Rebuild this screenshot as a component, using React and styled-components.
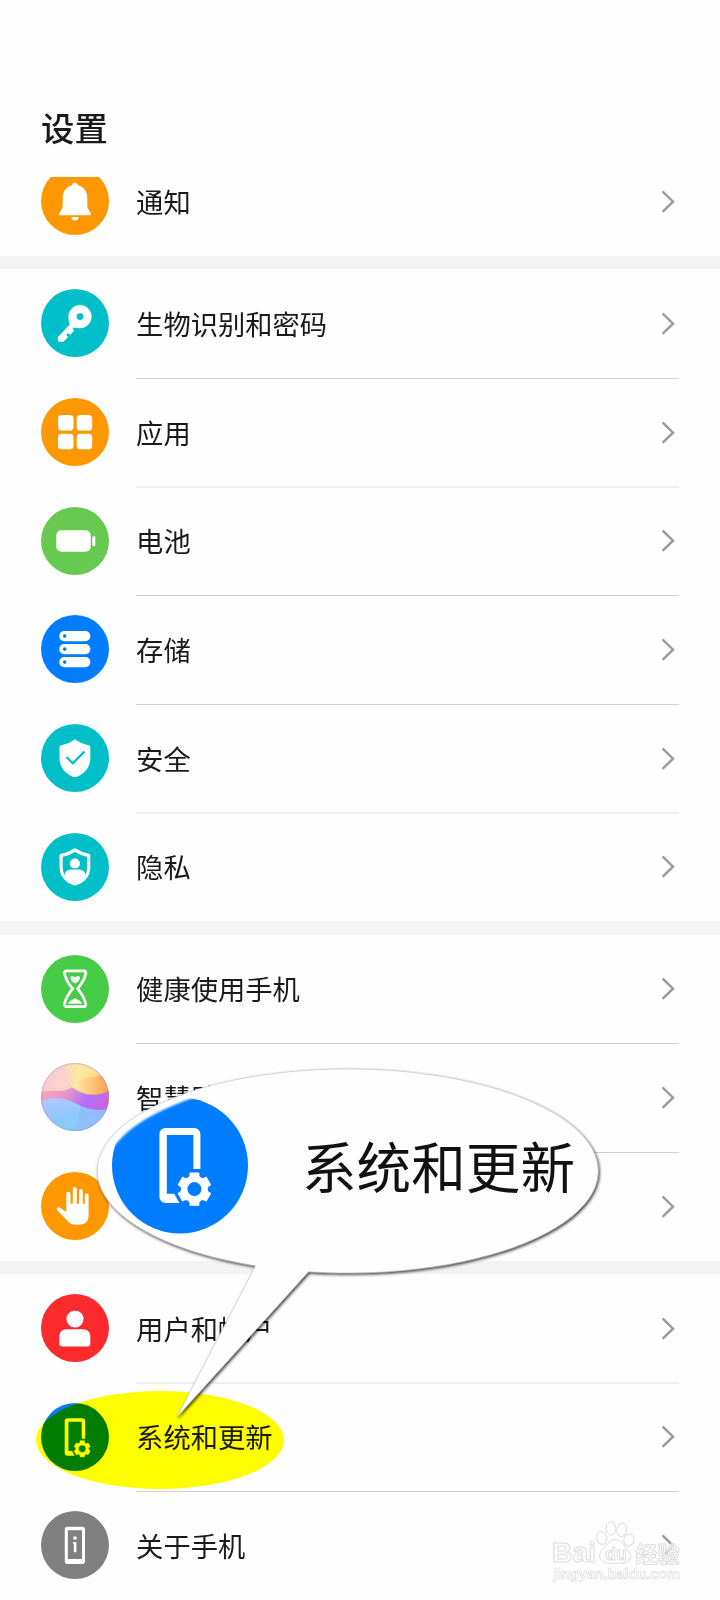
import React from "react";
import styled, { createGlobalStyle } from "styled-components";

const GlobalStyle = createGlobalStyle`
  * {
    box-sizing: border-box;
  }
  body {
    margin: 0;
    background: #fff;
    font-family: "Noto Sans CJK SC", sans-serif;
    color: #1a1a1a;
  }
`;

const Screen = styled.div`
  position: relative;
  width: 720px;
  height: 1600px;
  overflow: hidden;
  background: #fefefe;
  isolation: isolate;
`;

const Header = styled.header`
  height: 177px;
  padding: 102px 41px 0;
`;

const Title = styled.h1`
  margin: 0;
  font-size: 33.4px;
  font-weight: 500;
  line-height: 50px;
`;

const Group = styled.section`
  display: flex;
  flex-direction: column;
  justify-content: flex-end;
  height: ${p => (p.$height ? p.$height : "auto")};
  margin-bottom: 13.33px;
  overflow: hidden;
`;

const List = styled.main`
  background: #f3f3f3;
`;

const Row = styled.div`
  display: flex;
  flex: none;
  align-items: center;
  height: 108.667px;
  padding: 0 41px 0 40.5px;
  background: #fefefe;
`;

const Badge = styled.div`
  flex: none;
  width: 68px;
  height: 68px;
  margin-top: -0.6px;
  border-radius: 50%;
  background: ${p => p.$color};

  svg {
    display: block;
  }
`;

const Content = styled.div`
  display: flex;
  flex: 1;
  align-items: center;
  justify-content: space-between;
  height: 100%;
  margin-left: 27px;
  margin-top: ${p => (p.$soft ? "-2px" : 0)};
  padding-right: 4px;
  border-top: ${p => (p.$soft ? 2 : 1)}px solid ${p => (p.$line ? (p.$soft ? "#efefef" : "#d2d2d2") : "transparent")};
`;

const Label = styled.span`
  padding: 0 0 2px 0.6px;
  font-size: 27.3px;
  line-height: 40px;
  white-space: nowrap;
`;

const Highlight = styled.div`
  position: absolute;
  left: 36px;
  top: 1391px;
  width: 248px;
  height: 98px;
  border-radius: 50%;
  background: #ffff00;
  mix-blend-mode: multiply;
`;

const Bubble = styled.svg`
  position: absolute;
  left: 80px;
  top: 1050px;
  overflow: visible;
`;

const BubbleText = styled.div`
  position: absolute;
  left: 302px;
  top: 1125px;
  font-size: 54.6px;
  line-height: 80px;
  white-space: nowrap;
  color: #111;
`;

const Watermark = styled.svg`
  position: absolute;
  left: 545px;
  top: 1515px;

  text {
    font-family: "Liberation Sans", "Noto Sans CJK SC", sans-serif;
    font-weight: 700;
  }
`;

const gearPath = (cx, cy) => {
  const points = [];
  for (let i = 0; i < 6; i++) {
    const base = i * 60 - 90;
    [[-30, 6.3], [-19, 6.8], [-15, 8.3], [15, 8.3], [19, 6.8]].forEach(([a, r]) => {
      const rad = ((base + a) * Math.PI) / 180;
      points.push(`${(cx + r * Math.cos(rad)).toFixed(2)} ${(cy + r * Math.sin(rad)).toFixed(2)}`);
    });
  }
  return `M${points.join("L")}Z`;
};

const PhoneGear = () => (
  <g fill="#fff">
    <path d="M44.2 35.7h-3.5V18.8H27.4v29.3h3.7l2.6 4.7h-7a3 3 0 0 1-3-3V18.2a3 3 0 0 1 3-3h14.5a3 3 0 0 1 3 3z" />
    <path
      fillRule="evenodd"
      stroke="#fff"
      strokeWidth=".6"
      strokeLinejoin="round"
      d={`${gearPath(41.2, 45.8)}M45 45.8a3.8 3.8 0 1 0-7.6 0a3.8 3.8 0 1 0 7.6 0Z`}
    />
  </g>
);

const shield = "M34 15.3C37.5 18 43 20.5 47.6 21.2Q49.3 21.5 49.3 23V34.5C49.3 44 42.5 51 34 53.3C25.5 51 18.5 44 18.5 34.5V23Q18.5 21.5 20.2 21.2C25 20.5 30.5 18 34 15.3Z";

const icons = {
  bell: (
    <g fill="#fff">
      <path d="M34 15.7c-1.7 0-2.9 1-3.1 2.6C25.2 19.8 21.7 24.8 21.7 31V39C21.7 41.5 18.6 45 17.9 47c-.2.8.3 1.3 1 1.3h30.2c.7 0 1.2-.5 1-1.3C49.4 45 46.3 41.5 46.3 39V31C46.3 24.8 42.8 19.8 37.1 18.3C36.9 16.7 35.7 15.7 34 15.7Z" />
      <path d="M30.5 50h7a3.5 3.5 0 0 1-7 0z" />
    </g>
  ),
  key: (
    <path
      fill="#fff"
      fillRule="evenodd"
      stroke="#fff"
      strokeWidth=".5"
      strokeLinejoin="round"
      d="M39 16.2A11.4 11.4 0 1 1 35.3 38.4L31.2 38.7L32.7 41.8L29.5 45.5L26.5 44L25 45.4L26.7 48.3L22.3 52.5H17.4L17 48.3L29 35.5Q27.6 32 27.6 27.7A11.4 11.4 0 0 1 39 16.2ZM39 23.9A3.7 3.7 0 1 0 39 31.3A3.7 3.7 0 1 0 39 23.9Z"
    />
  ),
  apps: (
    <g fill="#fff">
      <rect x="17" y="17" width="15.5" height="15.5" rx="3.6" />
      <rect x="35.7" y="17" width="15.5" height="15.5" rx="3.6" />
      <rect x="17" y="35.8" width="15.5" height="15.5" rx="3.6" />
      <rect x="35.7" y="35.8" width="15.5" height="15.5" rx="3.6" />
    </g>
  ),
  battery: (
    <g fill="#fff">
      <rect x="15.3" y="23.3" width="34.4" height="21.4" rx="5" />
      <path d="M51.2 30.5q1-1.5 2-1.5t1.1 1.5v7.3q0 1.5-1.1 1.5t-2-1.5z" />
    </g>
  ),
  storage: (
    <g>
      {[16, 29, 42].map(y => (
        <g key={y}>
          <rect x="18.3" y={y} width="31" height="10.2" rx="4.8" fill="#fff" />
          <circle cx="23.7" cy={y + 5.1} r="1.8" fill="#007dff" />
        </g>
      ))}
    </g>
  ),
  security: (
    <g>
      <path d={shield} fill="#fff" />
      <path d="M25.5 33L31.8 39.3L43.5 27.6" fill="none" stroke="#00bfc9" strokeWidth="2.2" />
    </g>
  ),
  privacy: (
    <g>
      <path
        d="M34 16.8C38 19.5 43 21.6 47.7 22.3V34C47.7 43 42 48.8 34 51C26 48.8 20.1 43 20.1 34V22.3C25 21.6 30 19.5 34 16.8Z"
        fill="none"
        stroke="#fff"
        strokeWidth="3.2"
        strokeLinejoin="round"
      />
      <circle cx="33.9" cy="30.5" r="5.1" fill="#fff" />
      <path d="M23.5 42C24 38 27 36.4 31 36.4H37C41 36.4 44 38 44.5 42Q41 49 34 51Q27 49 23.5 42Z" fill="#fff" />
    </g>
  ),
  hourglass: (
    <g>
      <path
        d="M25 15.9H43.3Q45.5 16.5 44.6 19C43.5 25 40.5 29 36.6 33.7C40.5 38.5 43.5 42.5 44.6 48.5Q45.3 51.4 43 51.6H25.3Q23 51.4 23.7 48.5C24.8 42.5 27.8 38.5 31.7 33.7C27.8 29 24.8 25 23.7 19Q22.8 16.5 25 15.9Z"
        fill="none"
        stroke="#fff"
        strokeWidth="2.8"
      />
      <path d="M34.2 28.6C31 26.5 29.4 24.5 29.4 22.9C29.4 21 32.5 20.5 34.2 22.5C36 20.5 39 21 39 22.9C39 24.5 37.4 26.5 34.2 28.6Z" fill="#fff" />
      <path d="M27 48.7C28.5 45.5 31.5 45 34.2 42.9C37 45 39.8 45.5 41.3 48.7Z" fill="#fff" />
    </g>
  ),
  assistant: (
    <g>
      <defs>
        <linearGradient id="sky" x1="0" y1="0" x2="1" y2="1">
          <stop offset="0" stopColor="#f6c3cf" />
          <stop offset=".45" stopColor="#f9d3c4" />
          <stop offset="1" stopColor="#fa9a80" />
        </linearGradient>
        <linearGradient id="sun" x1="0" y1=".2" x2="1" y2=".8">
          <stop offset="0" stopColor="#fad9b4" />
          <stop offset=".4" stopColor="#fdeb9e" />
          <stop offset="1" stopColor="#fbb45f" />
        </linearGradient>
        <linearGradient id="dune" x1="0" y1="0" x2="1" y2="0">
          <stop offset="0" stopColor="#fdeeb0" />
          <stop offset=".5" stopColor="#fcc878" />
          <stop offset="1" stopColor="#fa9f50" />
        </linearGradient>
        <linearGradient id="violet" x1="0" y1="0" x2="1" y2=".3">
          <stop offset="0" stopColor="#f4a9bd" />
          <stop offset=".4" stopColor="#e896c8" />
          <stop offset=".75" stopColor="#b070f8" />
          <stop offset="1" stopColor="#c566e4" />
        </linearGradient>
        <linearGradient id="sea" x1=".2" y1="0" x2=".6" y2="1">
          <stop offset="0" stopColor="#b3c8fa" />
          <stop offset=".55" stopColor="#8bc8fd" />
          <stop offset="1" stopColor="#86d0fb" />
        </linearGradient>
        <clipPath id="ball">
          <circle cx="34" cy="34" r="34" />
        </clipPath>
        <filter id="haze">
          <feGaussianBlur stdDeviation="3" />
        </filter>
      </defs>
      <g clipPath="url(#ball)">
        <rect width="68" height="68" fill="url(#sky)" />
        <path d="M20 -5H72V30C56 34 38 32 28 20Z" fill="url(#sun)" filter="url(#haze)" />
        <circle cx="19" cy="13" r="13" fill="#fbd3d4" opacity=".6" />
        <path d="M0 29C13 26 22 31 31 24C43 33 56 32 68 27V50H0Z" fill="url(#violet)" />
        <path d="M31 23C40 14 52 13 68 13V28C56 34 40 33 31 23Z" fill="url(#dune)" />
        <path d="M0 38C15 32 26 36 36 41C47 47 57 48 68 46V68H0Z" fill="url(#sea)" />
        <path d="M32 68C38 60 38 51 40 43C50 48 58 48 68 46V68Z" fill="#9aaafb" opacity=".35" />
      </g>
      <circle cx="34" cy="34" r="33.5" fill="none" stroke="#b58ab8" strokeOpacity=".5" />
    </g>
  ),
  hand: (
    <path
      fill="#fff"
      d="M25.3 21.8a2.1 2.1 0 0 1 4.2 0V31.7h2.3V17a2 2 0 0 1 4 0V31.7H38V19a1.9 1.9 0 0 1 3.8 0V31.7H43.8V23.2a1.9 1.9 0 0 1 3.8 0V43C47.6 49.5 44.5 52.7 38 52.7H34.5C30.5 52.7 28 51 25.8 48.2L16.2 38.2C14.8 36.5 16.6 34.5 18.6 35.5L25.3 40Z"
    />
  ),
  user: (
    <g fill="#fff">
      <circle cx="34" cy="25" r="8.6" />
      <path d="M18.3 43.5C18.3 37.5 21 35.2 26.5 35.2H41C46.6 35.2 49.3 37.5 49.3 43.5V50Q49.3 52.4 47 52.4H20.7Q18.3 52.4 18.3 50Z" />
    </g>
  ),
  system: <PhoneGear />,
  about: (
    <g fill="#fff">
      <path
        fillRule="evenodd"
        d="M26.5 15.7H41.3Q44 15.7 44 18.4V50.3Q44 53 41.3 53H26.5Q23.8 53 23.8 50.3V18.4Q23.8 15.7 26.5 15.7ZM26.8 19.3V48H41V19.3Z"
      />
      <circle cx="34" cy="27" r="1.8" />
      <path d="M32 31H35.4V41.3H32.8V33H32Z" />
    </g>
  )
};

// soft: the divider above the row falls between two pixels
const groups = [
  {
    height: "79px",
    rows: [{ icon: "bell", color: "#ff9800", label: "通知" }]
  },
  {
    rows: [
      { icon: "key", color: "#00bfc9", label: "生物识别和密码" },
      { icon: "apps", color: "#ff9800", label: "应用" },
      { icon: "battery", color: "#67c94f", label: "电池", soft: true },
      { icon: "storage", color: "#007dff", label: "存储" },
      { icon: "security", color: "#00bfc9", label: "安全" },
      { icon: "privacy", color: "#00bfc9", label: "隐私", soft: true }
    ]
  },
  {
    rows: [
      { icon: "hourglass", color: "#47cc47", label: "健康使用手机" },
      { icon: "assistant", color: "transparent", label: "智慧助手" },
      { icon: "hand", color: "#ff9800", label: "辅助功能" }
    ]
  },
  {
    rows: [
      { icon: "user", color: "#fa2a2d", label: "用户和帐户" },
      { icon: "system", color: "#007dff", label: "系统和更新", soft: true },
      { icon: "about", color: "#808080", label: "关于手机" }
    ]
  }
];

const Chevron = () => (
  <svg width="14" height="24" viewBox="0 0 14 24" fill="none">
    <path d="M2.3 2.2L12 11.7L2.3 21.2" stroke="#9c9c9c" strokeWidth="2.5" strokeLinecap="round" />
  </svg>
);

const SettingRow = ({ icon, color, label, soft, first }) => (
  <Row>
    <Badge $color={color}>
      <svg width="68" height="68" viewBox="0 0 68 68">
        {icons[icon]}
      </svg>
    </Badge>
    <Content $line={!first} $soft={soft}>
      <Label>{label}</Label>
      <Chevron />
    </Content>
  </Row>
);

// speech bubble magnifying the highlighted row
const Callout = () => (
  <>
    <Bubble width="540" height="380" viewBox="80 1050 540 380">
      <defs>
        <filter id="shadow" x="-5%" y="-5%" width="110%" height="110%">
          <feDropShadow dx="1.2" dy="1.5" stdDeviation="1.6" floodColor="#000" floodOpacity=".8" />
        </filter>
        <filter id="soften">
          <feGaussianBlur stdDeviation="1.2" />
        </filter>
        <mask id="inside">
          <ellipse cx="353" cy="1176" rx="250" ry="101.5" fill="#fff" filter="url(#soften)" />
        </mask>
      </defs>
      <path
        d="M255.5 1265.8A250.5 102 0 1 1 308.5 1271.7L177 1417Z"
        fill="#fefefe"
        stroke="#b4b4b4"
        strokeWidth=".5"
        filter="url(#shadow)"
      />
      <g mask="url(#inside)">
        <g transform="translate(112 1097.5) scale(2)">
          <circle cx="34" cy="34" r="34" fill="#007dff" />
          <PhoneGear />
        </g>
      </g>
    </Bubble>
    <BubbleText>系统和更新</BubbleText>
  </>
);

const BaiduMark = () => (
  <Watermark width="145" height="75" viewBox="0 0 145 75">
    <g fill="#fff" fillOpacity=".75" stroke="#dcdcdc" strokeWidth="1">
      <text x="7" y="47" fontSize="28" textLength="44" lengthAdjust="spacingAndGlyphs">Bai</text>
      <ellipse cx="56.7" cy="23" rx="5" ry="6.5" transform="rotate(-12 56.7 23)" />
      <ellipse cx="66" cy="13.5" rx="4.8" ry="6.7" />
      <ellipse cx="76.8" cy="14.8" rx="4.8" ry="6.7" transform="rotate(10 76.8 14.8)" />
      <ellipse cx="83.8" cy="25" rx="5" ry="6" transform="rotate(15 83.8 25)" />
      <path d="M70 24.5C77 24.5 78 30 82 34C87 38 87 47 79 48C74 48.5 67 48.5 62 48C53 47 53 38 58 34C63 30 64 24.5 70 24.5Z" />
      <text x="60" y="44.5" fontSize="19" textLength="22" lengthAdjust="spacingAndGlyphs">du</text>
      <text x="90.5" y="46.5" fontSize="22">经验</text>
      <text x="8" y="64" fontSize="15.5" textLength="127" lengthAdjust="spacingAndGlyphs" strokeWidth=".7">jingyan.baidu.com</text>
    </g>
  </Watermark>
);

const App = () => (
  <Screen>
    <GlobalStyle />
    <Header>
      <Title>设置</Title>
    </Header>
    <List>
      {groups.map((group, i) => (
        <Group key={i} $height={group.height}>
          {group.rows.map((row, j) => (
            <SettingRow key={row.label} {...row} first={j === 0} />
          ))}
        </Group>
      ))}
    </List>
    <Highlight />
    <Callout />
    <BaiduMark />
  </Screen>
);

export default App;
